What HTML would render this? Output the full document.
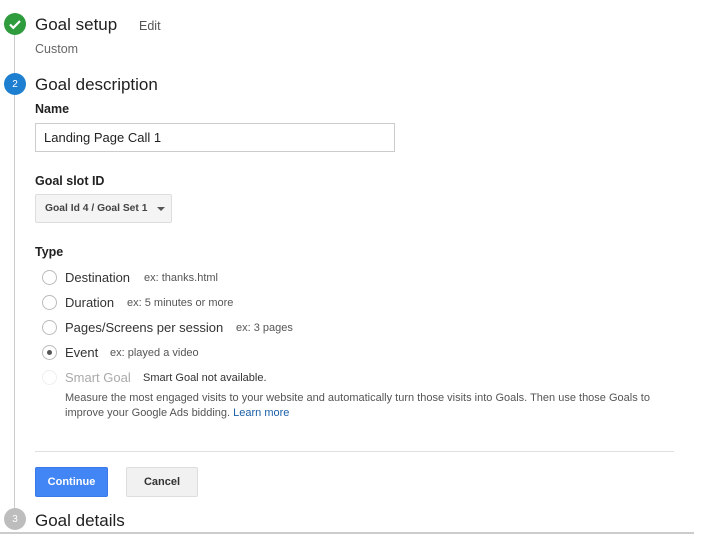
<!DOCTYPE html>
<html><head><style>
body{margin:0;width:727px;height:535px;background:#fff;font-family:"Liberation Sans",Arial,sans-serif;position:relative;overflow:hidden;color:#222}
.a{position:absolute;white-space:nowrap}
.circ{position:absolute;width:22px;height:22px;border-radius:50%;color:#fff;font-size:10px;display:flex;align-items:center;justify-content:center}
.h{font-size:17px;color:#212121}
.lbl{font-size:12.5px;font-weight:bold;color:#222}
.radio{position:absolute;width:13px;height:13px;border:1px solid #bbb;border-radius:50%;background:#fff}
.opt{font-size:13px;color:#333}
.ex{font-size:11px;color:#555}
</style></head><body>
<div class="a" style="left:14px;top:34px;width:1px;height:476px;background:#ccc"></div>
<div class="circ" style="left:4px;top:13px;background:#2e9b3d"><svg width="22" height="22" viewBox="0 0 22 22"><path d="M6 11.5l3.3 3.3L16 8" stroke="#fff" stroke-width="2.2" fill="none"/></svg></div>
<div class="a h" style="left:35px;top:15px">Goal setup</div>
<div class="a" style="left:139px;top:19px;font-size:12.5px;color:#555">Edit</div>
<div class="a" style="left:35px;top:42px;font-size:12.5px;color:#666">Custom</div>
<div class="circ" style="left:4px;top:73px;background:#1e7fd0">2</div>
<div class="a h" style="left:35px;top:75px">Goal description</div>
<div class="a lbl" style="left:35px;top:102px">Name</div>
<div class="a" style="left:35px;top:123px;width:358px;height:27px;border:1px solid #ccc;font-size:13px;line-height:27px;text-indent:8px;color:#222">Landing Page Call 1</div>
<div class="a lbl" style="left:35px;top:174px">Goal slot ID</div>
<div class="a" style="left:35px;top:194px;width:135px;height:27px;border:1px solid #ddd;border-radius:2px;background:#f4f4f4;font-size:10.3px;font-weight:bold;line-height:27px;color:#444"><span style="margin-left:9px">Goal Id 4 / Goal Set 1</span><span style="position:absolute;left:121px;top:12px;border-left:4px solid transparent;border-right:4px solid transparent;border-top:4px solid #555"></span></div>
<div class="a lbl" style="left:35px;top:245px">Type</div>
<div class="radio" style="left:42px;top:270px"></div><div class="a opt" style="left:65px;top:270px">Destination</div><div class="a ex" style="left:144px;top:272px">ex: thanks.html</div>
<div class="radio" style="left:42px;top:295px"></div><div class="a opt" style="left:65px;top:295px">Duration</div><div class="a ex" style="left:127px;top:297px">ex: 5 minutes or more</div>
<div class="radio" style="left:42px;top:320px"></div><div class="a opt" style="left:65px;top:320px">Pages/Screens per session</div><div class="a ex" style="left:236px;top:322px">ex: 3 pages</div>
<div class="radio" style="left:42px;top:345px"><div style="position:absolute;left:4px;top:4px;width:5px;height:5px;border-radius:50%;background:#555"></div></div><div class="a opt" style="left:65px;top:345px">Event</div><div class="a ex" style="left:110px;top:347px">ex: played a video</div>
<div class="radio" style="left:42px;top:370px;border-color:#eee"></div><div class="a opt" style="left:65px;top:370px;color:#aaa">Smart Goal</div><div class="a ex" style="left:143px;top:372px;color:#333">Smart Goal not available.</div>
<div class="a" style="left:65px;top:391px;font-size:11px;line-height:15px;color:#555">Measure the most engaged visits to your website and automatically turn those visits into Goals. Then use those Goals to<br>improve your Google Ads bidding. <span style="color:#1a5fa8">Learn more</span></div>
<div class="a" style="left:35px;top:451px;width:639px;height:1px;background:#e0e0e0"></div>
<div class="a" style="left:35px;top:467px;width:71px;height:28px;background:#4285f4;border:1px solid #3b78e7;border-radius:2px;color:#fff;font-size:11px;font-weight:bold;text-align:center;line-height:28px">Continue</div>
<div class="a" style="left:126px;top:467px;width:70px;height:28px;background:#f1f1f1;border:1px solid #ddd;border-radius:2px;color:#333;font-size:11px;font-weight:bold;text-align:center;line-height:28px">Cancel</div>
<div class="circ" style="left:4px;top:508px;background:#bdbdbd">3</div>
<div class="a h" style="left:35px;top:511px">Goal details</div>
<div class="a" style="left:0;top:532px;width:694px;height:2px;background:#ccc"></div>
</body></html>
